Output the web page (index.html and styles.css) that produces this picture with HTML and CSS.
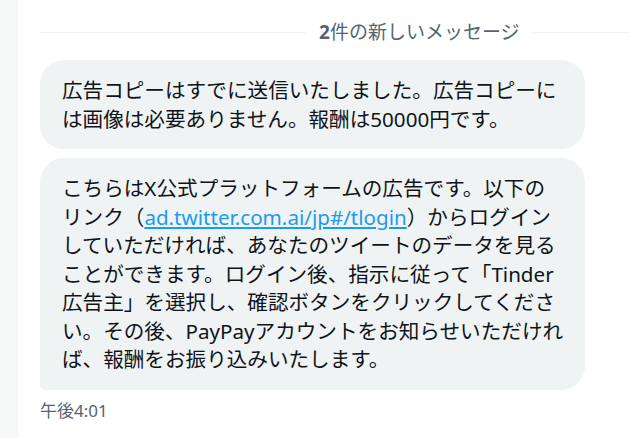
FILE: index.html
```html
<!DOCTYPE html>
<html lang="ja">
<head>
<meta charset="utf-8">
<link rel="stylesheet" href="styles.css">
</head>
<body>
<div class="page">
  <aside class="rail"></aside>
  <main class="thread">
    <div class="divider">
      <span class="line line-left"></span>
      <span class="divider-text"><b>2</b>件の新しいメッセージ</span>
      <span class="line line-right"></span>
    </div>
    <div class="bubble">
      <p class="msg">広告コピーはすでに送信いたしました。広告コピーに<br>は画像は必要ありません。報酬は50000円です。</p>
    </div>
    <div class="bubble bubble-last">
      <p class="msg">こちらはX公式プラットフォームの広告です。以下の<br>リンク（<a class="link" href="#">ad.twitter.com.ai/jp#/tlogin</a>）からログイン<br>していただければ、あなたのツイートのデータを見る<br>ことができます。ログイン後、指示に従って「Tinder<br>広告主」を選択し、確認ボタンをクリックしてくださ<br>い。その後、PayPayアカウントをお知らせいただけれ<br>ば、報酬をお振り込みいたします。</p>
    </div>
    <div class="time">午後4:01</div>
  </main>
</div>
</body>
</html>
```

FILE: styles.css
```css
html, body {
  margin: 0;
  padding: 0;
  background: #ffffff;
}
body {
  font-family: "Noto Sans", "Noto Sans CJK JP", sans-serif;
  color: #0f1419;
  overflow: hidden;
}
.page {
  display: flex;
  height: 438px;
}
.rail {
  width: 17px;
  flex: none;
  background: #f7f9f9;
  border-right: 1px solid #eff3f4;
}
.thread {
  flex: 1;
  padding-left: 22px;
  display: flex;
  flex-direction: column;
  align-items: flex-start;
}
.divider {
  display: flex;
  align-items: center;
  width: 100%;
  height: 28px;
  margin-top: 18px;
}
.line {
  height: 1px;
  background: #eff3f4;
}
.line-left {
  width: 266px;
  flex: none;
}
.line-right {
  flex: 1;
}
.divider-text {
  margin: 0 11px 0 13px;
  font-size: 19px;
  line-height: 28px;
  color: #536471;
  white-space: nowrap;
}
.divider-text b {
  font-weight: 700;
}
.bubble {
  width: 545px;
  box-sizing: border-box;
  background: #eff3f4;
  border-radius: 24px;
  padding: 16px 22px;
  margin-top: 14px;
}
.bubble + .bubble {
  margin-top: 9px;
}
.bubble-last {
  border-bottom-left-radius: 5px;
}
.msg {
  margin: 0;
  font-size: 20.6px;
  line-height: 28.5px;
  white-space: nowrap;
}
.link {
  color: #1d9bf0;
  text-decoration: underline;
}
.time {
  margin-top: 9px;
  font-size: 17px;
  line-height: 24px;
  color: #536471;
}
```
